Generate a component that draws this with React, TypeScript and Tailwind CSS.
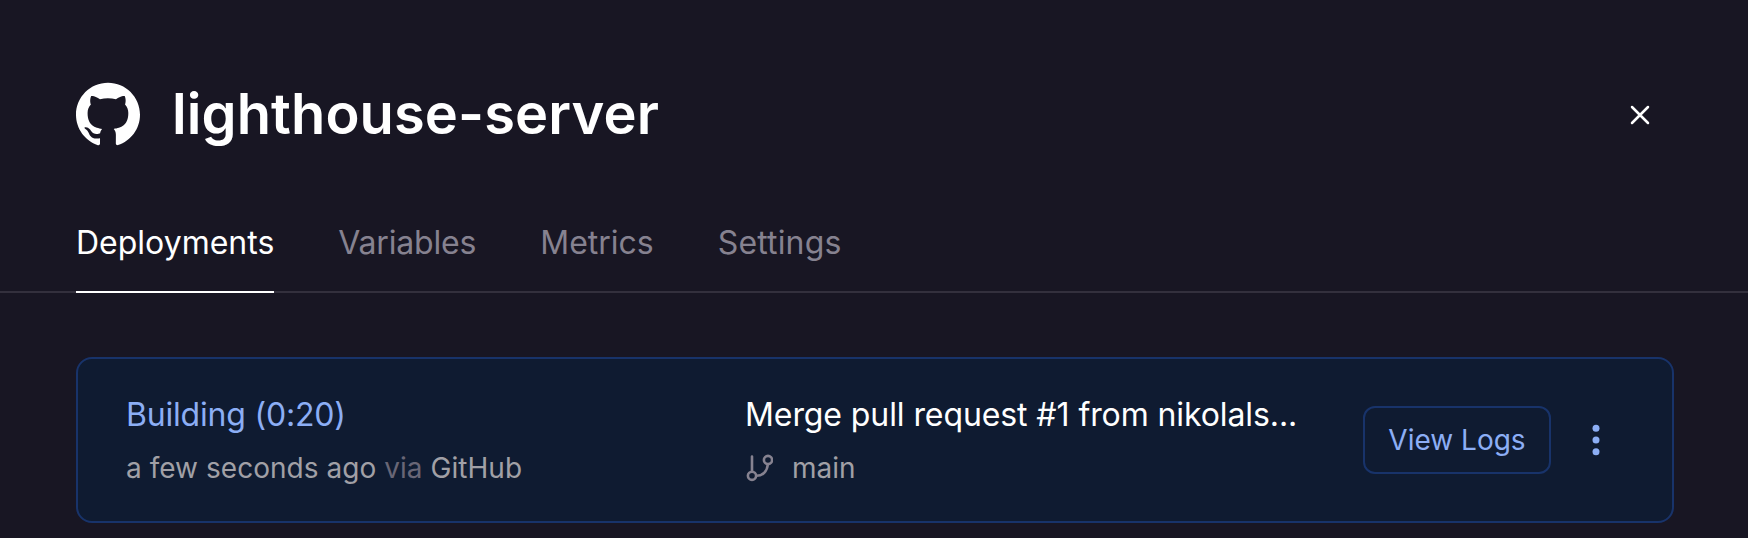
const tabs = [
  { label: "Deployments", style: "-mb-0.5 border-b-2 border-white text-white" },
  { label: "Variables", style: "text-[#868290] tracking-[-0.18px]" },
  { label: "Metrics", style: "text-[#868290]" },
  { label: "Settings", style: "text-[#868290] tracking-[0.15px]" },
];

function GitHubMark() {
  return (
    <svg viewBox="0 0 24 24" className="h-16 w-16 shrink-0 fill-white" aria-hidden="true">
      <path d="M12 .297c-6.63 0-12 5.373-12 12 0 5.303 3.438 9.8 8.205 11.385.6.113.82-.258.82-.577 0-.285-.01-1.04-.015-2.04-3.338.724-4.042-1.61-4.042-1.61C4.422 18.07 3.633 17.7 3.633 17.7c-1.087-.744.084-.729.084-.729 1.205.084 1.838 1.236 1.838 1.236 1.07 1.835 2.809 1.305 3.495.998.108-.776.417-1.305.76-1.605-2.665-.3-5.466-1.332-5.466-5.93 0-1.31.465-2.38 1.235-3.22-.135-.303-.54-1.523.105-3.176 0 0 1.005-.322 3.3 1.23.96-.267 1.98-.399 3-.405 1.02.006 2.04.138 3 .405 2.28-1.552 3.285-1.23 3.285-1.23.645 1.653.24 2.873.12 3.176.765.84 1.23 1.91 1.23 3.22 0 4.61-2.805 5.625-5.475 5.92.42.36.81 1.096.81 2.22 0 1.606-.015 2.896-.015 3.286 0 .315.21.69.825.57C20.565 22.092 24 17.592 24 12.297c0-6.627-5.373-12-12-12" />
    </svg>
  );
}

function BranchIcon() {
  return (
    <svg viewBox="0 0 28 28" className="h-7 w-7 shrink-0 fill-none stroke-[#868290] stroke-[2.6]" strokeLinecap="round" aria-hidden="true">
      <path d="M7 2.600V17.500M22.800 10.500C22.200 17 18 21.800 11.500 21.800" />
      <circle cx="7" cy="21.800" r="4.100" />
      <circle cx="23" cy="6" r="4.100" />
    </svg>
  );
}

export default function App() {
  return (
    <div className="h-[538px] w-full overflow-hidden bg-[#181623] font-['Inter',sans-serif] text-white">
      <header className="flex items-center justify-between pt-[82px] pr-[98px] pl-[76px]">
        <div className="flex items-center gap-8">
          <GitHubMark />
          <h1 className="text-[56px] leading-16 font-semibold tracking-[0.1px]">lighthouse-server</h1>
        </div>
        <button aria-label="Close" className="flex h-5 w-5 items-center justify-center pt-0.5">
          <svg viewBox="0 0 20 20" className="h-5 w-5 shrink-0 fill-none stroke-white stroke-[2.5]" strokeLinecap="round">
            <path d="M2 2l16 16M18 2L2 18" />
          </svg>
        </button>
      </header>

      <nav className="mt-[75px] flex h-[72px] items-stretch gap-16 border-b-2 border-[#33303d] pl-[76px] text-[32px] leading-[44px]">
        {tabs.map((tab) => (
          <button key={tab.label} className={`flex items-start ${tab.style}`}>
            {tab.label}
          </button>
        ))}
      </nav>

      <section className="mt-16 mr-[74px] ml-[76px] flex h-[166px] items-center rounded-2xl border-2 border-[#18336a] bg-[#0f1b31] pl-12">
        <div className="w-[619px] shrink-0 pb-0.5">
          <p className="text-[32px] leading-[49px] tracking-[-0.2px] text-[#8caef5]">Building (0:20)</p>
          <p className="mt-[9px] text-[28px] leading-10 tracking-[0.04px] text-[#a1a0a6]">
            a few seconds ago <span className="text-[#686676]">via</span> GitHub
          </p>
        </div>
        <div className="w-[618px] shrink-0 pb-0.5">
          <p className="text-[32px] leading-[49px] tracking-[-0.09px]">Merge pull request #1 from nikolals...</p>
          <div className="mt-[9px] flex items-center gap-[19px] text-[28px] leading-10 text-[#a1a0a6]">
            <BranchIcon />
            main
          </div>
        </div>
        <button className="h-[68px] w-[188px] shrink-0 rounded-xl border-2 border-[#18336a] text-[28px] text-[#8caef5]">
          View Logs
        </button>
        <button aria-label="More actions" className="ml-[41px]">
          <svg viewBox="0 0 8 32" className="h-8 w-2 fill-[#8caef5]">
            <circle cx="4" cy="4.300" r="3.500" />
            <circle cx="4" cy="16" r="3.500" />
            <circle cx="4" cy="27.700" r="3.500" />
          </svg>
        </button>
      </section>
    </div>
  );
}
